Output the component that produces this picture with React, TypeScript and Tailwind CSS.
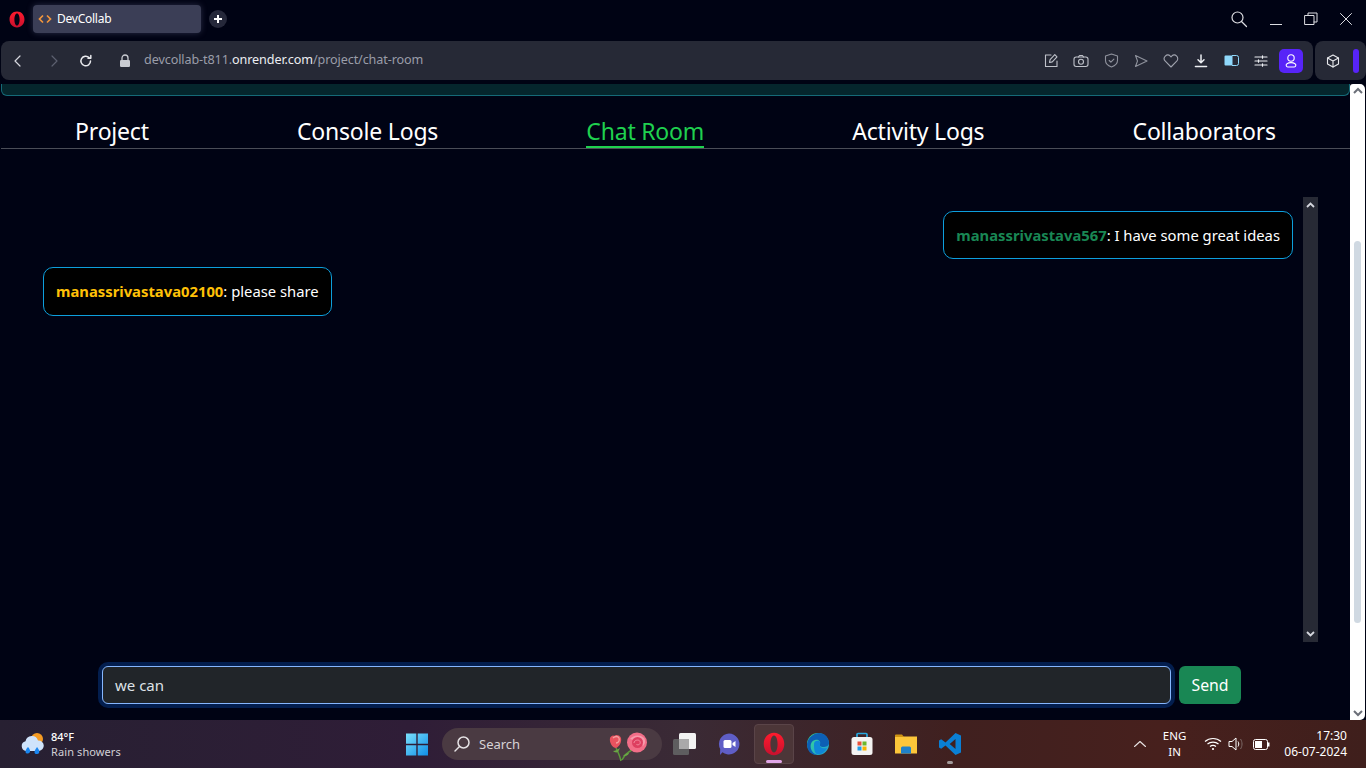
import React from "react";

const S = "font-['Noto_Sans','Open_Sans',sans-serif]";

function Stroke({ children, size = 16, className = "", w = 1.2, vb = 16 }: { children: React.ReactNode; size?: number; className?: string; w?: number; vb?: number }) {
  return (
    <svg width={size} height={size} viewBox={`0 0 ${vb} ${vb}`} fill="none" stroke="currentColor" strokeWidth={w} strokeLinecap="round" strokeLinejoin="round" className={className}>
      {children}
    </svg>
  );
}

function OperaMark({ w, h, id }: { w: number; h: number; id: string }) {
  return (
    <svg width={w} height={h} viewBox="0 0 24 24" preserveAspectRatio="none">
      <defs>
        <linearGradient id={id} x1="0" y1="0" x2="0" y2="1">
          <stop offset="0" stopColor="#ff1b2d" />
          <stop offset="1" stopColor="#c8102e" />
        </linearGradient>
      </defs>
      <path fillRule="evenodd" fill={`url(#${id})`} d="M12 .8C5.400.8.800 5.800.800 12s4.600 11.200 11.200 11.200S23.200 18.200 23.200 12 18.600.8 12 .8Zm0 2.700c2.400 0 3.900 3.800 3.900 8.500s-1.500 8.500-3.900 8.500-3.900-3.800-3.900-8.500S9.600 3.500 12 3.500Z" />
    </svg>
  );
}

function TitleBar() {
  return (
    <div className="h-[41px] flex items-center shrink-0 relative">
      <div className="w-[33px] flex justify-center mt-[-3px]"><OperaMark w={16} h={17} id="op1" /></div>
      <div className="w-[168px] h-[28px] rounded-[4px] bg-[#3b3e56] flex items-center pl-[5px] gap-[5px] shadow-[0_0_6px_rgba(90,95,130,0.45)] mt-[-3px]">
        <svg width="14" height="14" viewBox="0 0 14 14" fill="none" stroke="#f3963c" strokeWidth="1.700"><path d="M5 3.500 1.500 7 5 10.500M9 3.500 12.500 7 9 10.500" /></svg>
        <span className={`${S} text-[12px] text-white tracking-[-0.25px]`}>DevCollab</span>
      </div>
      <div className="ml-[8px] w-[18px] h-[18px] rounded-full bg-[#25283a] flex items-center justify-center mt-[-3px]">
        <svg width="10" height="10" viewBox="0 0 10 10" stroke="#fff" strokeWidth="2"><path d="M5 1v8M1 5h8" /></svg>
      </div>
      <div className="ml-auto flex items-center text-[#dcdde2] pr-[13px] gap-[21px] mt-[-3px]">
        <Stroke size={18} vb={18} w={1.200}><circle cx="7.500" cy="7.500" r="5.500" /><path d="m11.500 11.500 5 5" /></Stroke>
        <svg width="14" height="14" viewBox="0 0 14 14" stroke="currentColor" className="mt-[3px]"><path d="M1 10.500h12" /></svg>
        <Stroke size={14} vb={14} w={1}><rect x="1" y="3.500" width="9" height="9" /><path d="M4 3.500V1h9v9h-3" /></Stroke>
        <Stroke size={14} vb={14} w={1}><path d="m1.500 1.500 11 11M12.500 1.500l-11 11" /></Stroke>
      </div>
    </div>
  );
}

function AddressBar() {
  return (
    <div className="h-[39px] flex gap-[2px] shrink-0 pl-[1px]">
      <div className="w-[1312px] rounded-[8px] bg-[#262936] flex items-center relative">
        <div className="w-[34px] flex justify-center text-[#d5d7de]">
          <Stroke size={14} vb={14} w={1.200}><path d="M9 2 4 7l5 5" /></Stroke>
        </div>
        <div className="w-[38px] flex justify-center text-[#5c6070]">
          <Stroke size={14} vb={14} w={1.200}><path d="m5 2 5 5-5 5" /></Stroke>
        </div>
        <div className="w-[26px] flex justify-center text-[#e8e9ed]">
          <Stroke size={14} vb={14} w={1.500}><path d="M11.500 7a4.800 4.800 0 1 1-1.400-3.400" /><path d="M11.800 1.500v2.800H9" /></Stroke>
        </div>
        <div className="w-[38px] flex justify-center pl-[13px]">
          <svg width="12" height="14" viewBox="0 0 12 14"><path d="M3 6V4a3 3 0 0 1 6 0v2" fill="none" stroke="#c9cbd2" strokeWidth="1.300" /><rect x="1" y="6" width="10" height="7" rx="1.200" fill="#c9cbd2" /></svg>
        </div>
        <div className={`${S} text-[12.600px] text-[#9a9da9] ml-[7px] tracking-[-0.1px]`}>
          devcollab-t811.<span className="text-[#eceef2]">onrender.com</span>/project/chat-room
        </div>
        <div className="ml-auto flex items-center text-[#bfc2ca]">
          <span className="w-[30px] flex justify-center"><Stroke size={15} vb={15} w={1.100}><path d="M7 2H1.500v11.500H13V8" /><path d="M5.500 9.500l.6-2.800 4.700-5 2.200 2.200-4.700 5Z" /></Stroke></span>
          <span className="w-[30px] flex justify-center"><Stroke size={16} w={1.100}><rect x="1" y="4" width="14" height="9.500" rx="2.200" /><path d="M5.500 4 6.500 2.500h3L10.500 4" /><circle cx="8" cy="8.700" r="2.500" /></Stroke></span>
          <span className="w-[30px] flex justify-center text-[#8f929d]"><Stroke size={15} vb={15} w={1.100}><path d="M7.500 1 13.500 3v4.500c0 3-2.600 5.200-6 6.500-3.400-1.300-6-3.500-6-6.500V3Z" /><path d="m5.200 7.500 1.700 1.700 3-3" /></Stroke></span>
          <span className="w-[30px] flex justify-center text-[#8f929d]"><Stroke size={14} vb={14} w={1.100}><path d="M1.500 1.500 13 7 1.500 12.500 3.500 7Z" /></Stroke></span>
          <span className="w-[30px] flex justify-center text-[#a0a3ae]"><Stroke size={16} w={1.100}><path d="M8 14 2.300 8.200a3.500 3.500 0 0 1 5-5L8 4l.7-.8a3.500 3.500 0 0 1 5 5Z" /></Stroke></span>
          <span className="w-[30px] flex justify-center text-[#eceef2]"><Stroke size={14} vb={14} w={1.500}><path d="M7 1v7.500M4 5.800 7 8.800l3-3" /><path d="M1.500 12.500h11" strokeWidth="1.600" /></Stroke></span>
          <span className="w-[30px] flex justify-center">
            <svg width="15" height="11" viewBox="0 0 15 11"><path d="M1.500 0.500h7v10h-7a1 1 0 0 1-1-1v-8a1 1 0 0 1 1-1Z" fill="#8fd8fb" /><path d="M8 .5h4.500a2 2 0 0 1 2 2v6a2 2 0 0 1-2 2H8" fill="none" stroke="#8fd8fb" /></svg>
          </span>
          <span className="w-[30px] flex justify-center text-[#eceef2]"><Stroke size={14} vb={14} w={1.200}><path d="M1 3h12M1 7h12M1 11h12" /><path d="M8.500 1.800v2.400M4.500 5.800v2.400M8.500 9.800v2.400" /></Stroke></span>
          <span className="w-[24px] h-[24px] rounded-[5px] bg-[#5724f8] flex items-center justify-center text-white mr-[10px] ml-[3px]">
            <Stroke size={16} w={1.100}><circle cx="8" cy="5" r="3.200" /><path d="M4.800 14h6.400a1.800 1.800 0 0 0 .8-3.300c-1-.7-2.400-1.100-4-1.100s-3 .4-4 1.100a1.800 1.800 0 0 0 .8 3.300Z" /></Stroke>
          </span>
        </div>
      </div>
      <div className="w-[51px] rounded-[8px] bg-[#262936] flex items-center pl-[11px] gap-[13px] text-[#e8e9ed]">
        <Stroke size={14} vb={14} w={1.100}><path d="M7 1 12.500 4v6L7 13 1.500 10V4Z" /><path d="M1.500 4 7 7l5.500-3M7 7v6" /></Stroke>
        <div className="w-[6px] h-[24px] rounded-[3px] bg-[#5724f8]" />
      </div>
    </div>
  );
}

function NavItem({ label, active }: { label: string; active?: boolean }) {
  return (
    <div className={`${S} h-[36px] flex items-center text-[23px] tracking-[-0.2px] ${active ? "pt-[4px] text-[#1fd14f] border-b-2 border-[#1fd14f]" : "pt-[2px] text-white"}`}>
      {label}
    </div>
  );
}

function Bubble({ name, color, text, extra = "" }: { name: string; color: string; text: string; extra?: string }) {
  return (
    <div className={`${S} bg-black border border-[#0d9fdc] rounded-[10px] px-[12px] py-[11px] text-[14.800px] leading-[24px] text-white whitespace-nowrap ${extra}`}>
      <span className={`font-bold ${color}`}>{name}</span>: {text}
    </div>
  );
}

function PageScrollbar() {
  return (
    <div className="w-[16px] shrink-0 pr-[1px]">
      <div className="h-full bg-white flex flex-col items-center rounded-tr-[5px] rounded-br-[5px] rounded-tl-[3px]">
        <svg width="10" height="7" viewBox="0 0 10 7" className="mt-[3px] shrink-0" fill="none" stroke="#6b6f78" strokeWidth="2"><path d="m1 6 4-4 4 4" /></svg>
        <div className="w-[7px] h-[382px] rounded-[3.500px] bg-[#d0d9e2] mt-[147px] shrink-0" />
        <svg width="10" height="7" viewBox="0 0 10 7" className="mt-auto mb-[3px] shrink-0" fill="none" stroke="#6b6f78" strokeWidth="2"><path d="m1 1 4 4 4-4" /></svg>
      </div>
    </div>
  );
}

function Page() {
  return (
    <div className="flex-1 flex min-h-0 mt-[4px]">
      <div className="flex-1 flex flex-col min-w-0">
        <div className="h-[12px] shrink-0 bg-[#05262d] border-b border-x border-[#156a78] rounded-b-[6px] ml-[1px]" />
        <div className="h-[53px] shrink-0 flex justify-around items-end border-b border-[#4a4d57] ml-[1px]">
          <NavItem label="Project" />
          <NavItem label="Console Logs" />
          <NavItem label="Chat Room" active />
          <NavItem label="Activity Logs" />
          <NavItem label="Collaborators" />
        </div>
        <div className="h-[445px] mt-[48px] shrink-0 flex pr-[32px]">
          <div className="flex-1 flex flex-col gap-[8px] pl-[43px] pr-[10px] pt-[14px]">
            <div className="flex justify-end"><Bubble name="manassrivastava567" color="text-[#198754]" text="I have some great ideas" /></div>
            <div className="flex justify-start"><Bubble name="manassrivastava02100" color="text-[#ffc107]" text="please share" extra="h-[49px]" /></div>
          </div>
          <div className="w-[15px] bg-[#272a35] flex flex-col items-center">
            <svg width="9" height="6" viewBox="0 0 9 6" className="mt-[5px]" fill="none" stroke="#d5d7de" strokeWidth="1.800"><path d="m1 5 3.500-3.500L8 5" /></svg>
            <svg width="9" height="6" viewBox="0 0 9 6" className="mt-auto mb-[5px]" fill="none" stroke="#d5d7de" strokeWidth="1.800"><path d="m1 1 3.500 3.500L8 1" /></svg>
          </div>
        </div>
        <div className="flex gap-[8px] pl-[102px] mt-[24px]">
          <div className={`${S} w-[1069px] h-[38px] rounded-[6px] bg-[#212529] border border-[#86b7fe] shadow-[0_0_0_4px_rgba(13,110,253,0.25)] flex items-center pl-[12px] pt-[1px] text-[15px] text-[#dee2e6]`}>we can</div>
          <div className={`${S} w-[62px] h-[38px] rounded-[6px] bg-[#198754] flex items-center justify-center pt-[2px] text-[15.800px] text-white`}>Send</div>
        </div>
      </div>
      <PageScrollbar />
    </div>
  );
}

function Taskbar() {
  return (
    <div className="h-[48px] shrink-0 bg-[linear-gradient(90deg,#272032_0%,#2f1d37_30%,#3a2a35_50%,#40201f_70%,#47201d_85%,#3f1f1c_100%)] flex items-center relative">
      <div className="flex items-center pl-[19px] gap-[6px] w-[405px]">
        <svg width="26" height="26" viewBox="0 0 26 26">
          <circle cx="18" cy="8" r="6" fill="#f59b23" />
          <path d="M7 20a5 5 0 0 1-.5-9.800A6.500 6.500 0 0 1 19 9.500 5.200 5.200 0 0 1 20 20Z" fill="#cfe3fb" />
          <path d="M7 22c-1.500-1.800 1-5 2-6 1 1 3 3.500 1.700 5.500-.8 1.200-2.800 1.300-3.700.5ZM16 22.500c-1.500-1.800 1-5 2-6.500 1 1.500 3.200 4 2 6-.8 1.200-3 1.300-4 .5Z" fill="#1a86f0" />
        </svg>
        <div className={`${S} leading-[15px]`}>
          <div className="text-[11px] text-white font-medium">84°F</div>
          <div className="text-[11px] text-[#d2cfd6] tracking-[0.1px]">Rain showers</div>
        </div>
      </div>
      <div className="flex items-center">
        <svg width="24" height="24" viewBox="0 0 24 24" className="mr-[13px]">
          <defs><linearGradient id="w" x1="0" y1="0" x2="1" y2="1"><stop offset="0" stopColor="#7be0fb" /><stop offset="1" stopColor="#0f8ee8" /></linearGradient></defs>
          <path fill="url(#w)" d="M1 1.500h10.300v10.300H1zM12.700 1.500H23v10.300H12.700zM1 13.200h10.300v10.300H1zM12.700 13.200H23v10.300H12.700z" />
        </svg>
        <div className="w-[220px] h-[32px] rounded-full bg-[#4a3a42] flex items-center pl-[11px] relative">
          <Stroke size={18} vb={18} w={1.500} className="text-[#e5e2e4]"><circle cx="10.500" cy="7.500" r="5.500" /><path d="M6.500 11.500 2 16" /></Stroke>
          <span className={`${S} text-[13px] text-[#d8d3d6] ml-[8px] mt-[1px]`}>Search</span>
          <svg width="46" height="30" viewBox="0 0 46 30" className="absolute right-[8px] top-[4px]">
            <path d="M8 16c2 4 4 8 5 13M24 18c-4 2-8 6-10 10" stroke="#5c9b3b" strokeWidth="1.500" fill="none" />
            <path d="M12 16c-3 2-5 3-7 3 1 1 3 2 5 1ZM21 21c-2 0-4 1-6 3 2 0 5 0 6-3Z" fill="#6aa845" />
            <path d="M2 6c1-2 3-3 4-2 2-2 6-1 7 2 1 4-2 9-5 10-3 0-7-5-6-10Z" fill="#e9535f" />
            <path d="M5 6c2-2 5-2 6 0 1 3-1 5-3 5" fill="none" stroke="#f4a0a0" strokeWidth="1.300" />
            <circle cx="29" cy="10.500" r="10" fill="#f26e88" />
            <path d="M22 7c3-4 10-5 14-1 2 3 1 6-1 8-3-4-8-6-13-7Z" fill="#f79aab" />
            <circle cx="29.500" cy="10.500" r="5.500" fill="#dd3f60" />
            <path d="M26 11c0-3 5-4 6-1.500s-1.500 4-3.500 3" fill="none" stroke="#f48ba0" strokeWidth="1" />
          </svg>
        </div>
        <div className="w-[48px] flex justify-center ml-[-1px]">
          <svg width="26" height="24" viewBox="0 0 26 24"><rect x="1" y="7" width="16" height="16" rx="1.500" fill="#5e5d5f" /><rect x="7" y="1" width="17" height="16" rx="1.500" fill="#f3f3f3" /><rect x="7" y="7" width="10" height="10" fill="#aaa9aa" /></svg>
        </div>
        <div className="w-[40px] flex justify-center">
          <svg width="24" height="24" viewBox="0 0 24 24"><path d="M12 1.500a10.500 10.500 0 1 1-6.500 18.800L3 23l.2-6A10.500 10.500 0 0 1 12 1.500Z" fill="#5f5ec6" /><rect x="6.500" y="8" width="8" height="8" rx="1.500" fill="#fff" /><path d="M15.500 11 18.500 9v6l-3-2Z" fill="#fff" /></svg>
        </div>
        <div className="w-[40px] h-[40px] ml-[5px] rounded-[4px] bg-[#4c3638] border border-[#5a4448] flex justify-center items-center relative">
          <OperaMark w={22} h={24} id="op2" />
          <div className="absolute bottom-[0px] left-[11px] w-[16px] h-[3px] rounded-full bg-[#e2a6e8]" />
        </div>
        <div className="w-[48px] flex justify-center">
          <svg width="24" height="24" viewBox="0 0 24 24">
            <defs><linearGradient id="e" x1="0" y1="0" x2="1" y2="1"><stop offset="0" stopColor="#3be08a" /><stop offset="1" stopColor="#1e9bd8" /></linearGradient></defs>
            <circle cx="12" cy="12" r="11" fill="url(#e)" />
            <path d="M1 12C2 5 8 1 13 1c5 0 10 4 10 10 0 3-3 4-6 4-2 0-4-1-3-3 1-3-2-5-5-4-4 1-5 5-4 9 1 3 3 5 6 6-6 0-10-4-10-11Z" fill="#0d5fb5" />
            <path d="M8 12c0-3 3-4 5-3 2 1 1 3 1 3-1 3 2 5 7 4-2 4-6 7-10 6-3-1-3-7-3-10Z" fill="#0f87d9" />
          </svg>
        </div>
        <div className="w-[40px] flex justify-center">
          <svg width="22" height="24" viewBox="0 0 22 24"><path d="M6 7V2.500a1 1 0 0 1 1-1h8a1 1 0 0 1 1 1V7" fill="none" stroke="#27a9e0" strokeWidth="1.700" /><rect x="0.500" y="5" width="21" height="18" rx="2.500" fill="#f4f3f2" /><rect x="6.500" y="9.500" width="4" height="4" fill="#e8503a" /><rect x="11.500" y="9.500" width="4" height="4" fill="#6cb82c" /><rect x="6.500" y="14.500" width="4" height="4" fill="#1f9de8" /><rect x="11.500" y="14.500" width="4" height="4" fill="#f7b500" /></svg>
        </div>
        <div className="w-[48px] flex justify-center">
          <svg width="24" height="22" viewBox="0 0 24 22"><path d="M1 3.500h22v17H1Z" fill="#fcc63a" /><path d="M1 2.500a1 1 0 0 1 1-1h6l2 2.500H1Z" fill="#cf9414" /><path d="M7 15a1.500 1.500 0 0 1 1.500-1.500h7A1.500 1.500 0 0 1 17 15v5.500H7Z" fill="#1f81c9" /></svg>
        </div>
        <div className="w-[40px] flex justify-center relative">
          <svg width="24" height="24" viewBox="0 0 24 24"><path d="M17.500 1 23 3.500v17L17.500 23 7.500 13.500l-4.300 3.300L1 15.500v-7l2.200-1.300 4.300 3.300ZM17.500 7l-5.800 5 5.800 5Z" fill="#0a7fd4" fillRule="evenodd" /></svg>
          <div className="absolute bottom-[-8px] left-[17px] w-[6px] h-[3px] rounded-full bg-[#a29a9a]" />
        </div>
      </div>
      <div className={`${S} absolute right-[0px] top-[0px] h-[48px] flex items-center text-white`}>
        <Stroke size={14} vb={14} w={1.100} className="text-[#e8e3e3]"><path d="m1.500 9.500 5.500-5 5.500 5" /></Stroke>
        <div className="ml-[16px] text-center text-[11.500px] leading-[16px]">ENG<br />IN</div>
        <svg width="18" height="16" viewBox="0 0 18 16" fill="none" stroke="#fff" strokeWidth="1.200" className="ml-[18px]"><path d="M1 5.500c4.500-4 11.500-4 16 0M3.500 8c3-2.500 8-2.500 11 0M6 10.500c1.700-1.300 4.300-1.300 6 0" /><circle cx="9" cy="13" r="1.100" fill="#fff" stroke="none" /></svg>
        <svg width="17" height="16" viewBox="0 0 17 16" fill="none" stroke="#fff" strokeWidth="1" className="ml-[6px]"><path d="M1 5.500h3L8 2v12l-4-3.500H1Z" /><path d="M10 5.500c1 1.500 1 3.500 0 5" /><path d="M12.500 3c2 3 2 7 0 10" stroke="#7d6a68" /></svg>
        <svg width="17" height="11" viewBox="0 0 17 11" className="ml-[8px]"><rect x=".5" y=".5" width="14" height="10" rx="2" fill="none" stroke="#fff" /><rect x="2" y="2" width="7" height="7" fill="#fff" /><rect x="15" y="3.500" width="1.500" height="4" fill="#fff" /></svg>
        <div className="ml-[14px] mr-[19px] text-right text-[12px] leading-[16px]">17:30<br />06-07-2024</div>
      </div>
    </div>
  );
}

export default function App() {
  return (
    <div className="w-[1366px] h-[768px] overflow-hidden bg-[#000314] flex flex-col">
      <TitleBar />
      <AddressBar />
      <Page />
      <Taskbar />
    </div>
  );
}
